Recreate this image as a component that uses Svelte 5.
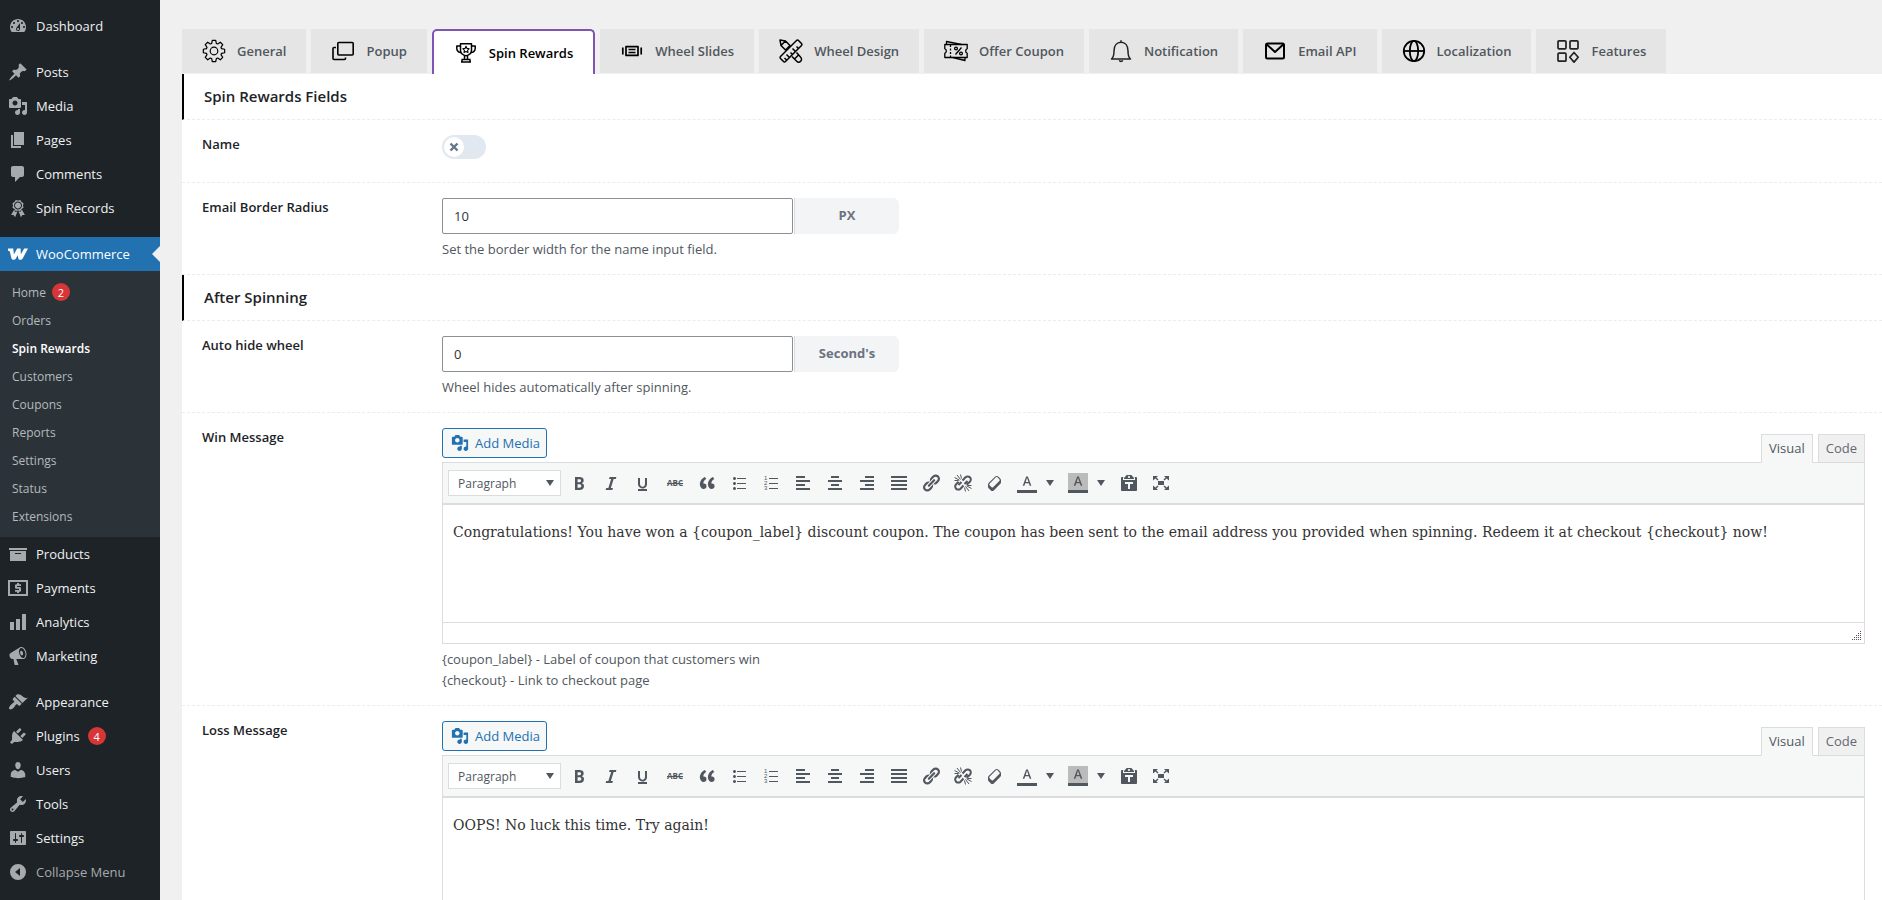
<script>
  const icons = {
    dashboard:
      'M3.76 16h12.48c1.1-1.37 1.76-3.11 1.76-5 0-4.42-3.58-8-8-8s-8 3.58-8 8c0 1.89.66 3.63 1.76 5zM10 4c.55 0 1 .45 1 1s-.45 1-1 1-1-.45-1-1 .45-1 1-1zM6 6c.55 0 1 .45 1 1s-.45 1-1 1-1-.45-1-1 .45-1 1-1zm8 0c.55 0 1 .45 1 1s-.45 1-1 1-1-.45-1-1 .45-1 1-1zm-5.37 5.55L12 7v6c0 1.1-.9 2-2 2s-2-.9-2-2c0-.57.24-1.08.63-1.45zM4 10c.55 0 1 .45 1 1s-.45 1-1 1-1-.45-1-1 .45-1 1-1zm12 0c.55 0 1 .45 1 1s-.45 1-1 1-1-.45-1-1 .45-1 1-1zm-5 3c0-.55-.45-1-1-1s-1 .45-1 1 .45 1 1 1 1-.45 1-1z',
    post: 'M10.44 3.02l1.82-1.82 6.36 6.35-1.83 1.82c-1.05-.68-2.48-.57-3.41.36l-.75.75c-.92.93-1.04 2.35-.35 3.41l-1.83 1.82-2.41-2.41-2.8 2.79c-.42.42-3.38 2.71-3.8 2.29s1.86-3.39 2.28-3.81l2.79-2.79L4.1 9.36l1.83-1.82c1.05.69 2.48.57 3.4-.36l.75-.75c.93-.92 1.05-2.35.36-3.41z',
    media:
      'M13 11V4c0-.55-.45-1-1-1h-1.67L9 1H5L3.67 3H2c-.55 0-1 .45-1 1v7c0 .55.45 1 1 1h10c.55 0 1-.45 1-1zM7 4.5c1.38 0 2.5 1.12 2.5 2.5S8.38 9.5 7 9.5 4.5 8.38 4.5 7 5.62 4.5 7 4.5zM14 6h5v10.5c0 1.38-1.12 2.5-2.5 2.5S14 17.88 14 16.5s1.12-2.5 2.5-2.5c.17 0 .34.02.5.05V9h-3V6zm-4 8.05V13h2v3.5c0 1.38-1.12 2.5-2.5 2.5S7 17.88 7 16.5 8.12 14 9.5 14c.17 0 .34.02.5.05z',
    page: 'M6 15V2h10v13H6zm-1 1h8v2H3V5h2v11z',
    comments: 'M5 2h9c1.1 0 2 .9 2 2v7c0 1.1-.9 2-2 2h-2l-5 5v-5H5c-1.1 0-2-.9-2-2V4c0-1.1.9-2 2-2z',
    awards:
      'M4.46 5.16L5 7.46l-.54 2.29 2.01 1.24L7.7 13l2.3-.54 2.3.54 1.23-2.01 2.01-1.24L15 7.46l.54-2.3-2-1.24-1.24-2.01-2.3.55-2.29-.54-1.25 2zm5.55 6.34c-2.21 0-4-1.79-4-4s1.79-4 4-4 4 1.79 4 4-1.79 4-4 4zm-.02-1C8.33 10.5 7 9.16 7 7.5c0-1.65 1.33-3 2.99-3s3 1.35 3 3c0 1.66-1.34 3-3 3zm3.84 1.1l-1.28 2.24-2.08-.47L13 19.2l1.4-2.2h2.5zm-7.7.07l1.25 2.25 2.13-.51L7 19.2 5.6 17H3.1z',
    woo: 'M0 4.6H5.2L5.9 10.2 9.2 4.6H12.6L12.9 10.2 16.2 4.6H20L14.8 14.2C14.2 15.3 13.3 15.8 12.3 15.8 11.2 15.8 10.4 15.1 10.2 13.9L9.8 11.2 8 14.2C7.4 15.2 6.5 15.8 5.5 15.8 4.4 15.8 3.6 15.2 3.3 14L2 8.2C1.8 7.3 1.3 6.9 0 6.8z',
    archive: 'M19 4v2H1V4h18zM2 7h16v10H2V7zm11 3V9H7v1h6z',
    payments:
      'M0 2h20v16H0zM2 4v12h16V4zM9 5h2v1.2h2v1.8H9v1h2.6c.9 0 1.4.6 1.4 1.4v2c0 .8-.5 1.4-1.4 1.4H11V15H9v-1.200H7V12h4v-1.200H8.400C7.500 10.800 7 10.200 7 9.400V7.600c0-.8.5-1.400 1.400-1.400H9z',
    chart: 'M18 18V2h-4v16h4zm-6 0V7H8v11h4zm-6 0v-8H2v8h4z',
    megaphone:
      'M18.15 5.94c.46 1.62.38 3.22-.02 4.48-.42 1.28-1.26 2.18-2.3 2.48-.16.06-.26.06-.4.06-.06.02-.12.02-.18.02-.06.02-.14.02-.22.02h-6.8l2.22 5.5c.02.14-.06.26-.14.34-.08.1-.24.16-.34.16H6.95c-.1 0-.26-.06-.34-.16-.08-.08-.16-.2-.14-.34l-1-5.5H4.25l-.02-.02c-.5.06-1.08-.18-1.54-.62s-.88-1.08-1.06-1.88c-.24-.8-.2-1.56-.02-2.2.18-.62.58-1.08 1.06-1.3l.02-.02 9-5.4c.1-.06.18-.1.24-.16.06-.04.14-.08.24-.12.16-.08.28-.12.5-.18 1.04-.3 2.24.1 3.22.98s1.84 2.24 2.26 3.86zm-2.58 5.98h-.02c.4-.1.74-.34 1.04-.7.58-.7.86-1.76.86-3.04 0-.64-.1-1.3-.28-1.98-.34-1.36-1.02-2.5-1.78-3.24s-1.68-1.1-2.46-.88c-.82.22-1.4.96-1.7 2-.32 1.04-.28 2.36.06 3.72.38 1.36 1 2.5 1.8 3.24.78.74 1.62 1.1 2.48.88zm-2.54-7.08c.22-.04.42-.02.62.04.38.16.76.48 1.02 1s.42 1.2.42 1.78c0 .3-.04.56-.12.8-.18.48-.44.84-.86.94-.34.1-.8-.06-1.14-.4s-.64-.86-.78-1.5c-.18-.62-.12-1.24.02-1.72s.48-.84.82-.94z',
    appearance:
      'M14.48 11.06L7.41 3.99l1.5-1.5c.5-.56 2.3-.47 3.51.32 1.21.8 1.43 1.28 2.91 2.1 1.18.64 2.45 1.26 4.45.85zm-.71.71L6.7 4.7 4.93 6.47c-.39.39-.39 1.02 0 1.41l1.06 1.06c.39.39.39 1.03 0 1.42-.6.6-1.43 1.11-2.21 1.69-.35.26-.7.53-1.01.84C1.43 14.23.4 16.08 1.4 17.07c.99 1 2.84-.03 4.18-1.36.31-.31.58-.66.85-1.02.57-.78 1.08-1.61 1.69-2.21.39-.39 1.02-.39 1.41 0l1.06 1.06c.39.39 1.02.39 1.41 0z',
    plugins:
      'M13.11 4.36L9.87 7.6 8 5.73l3.24-3.24c.35-.34 1.05-.2 1.56.32.52.51.66 1.21.31 1.55zm-8 1.77l.91-1.12 9.01 9.01-1.19.84c-.71.71-2.63 1.16-3.82 1.16H6.14L4.9 17.26c-.59.59-1.54.59-2.12 0-.59-.58-.59-1.53 0-2.12l1.24-1.24v-3.88c0-1.13.4-3.19 1.09-3.89zm7.26 3.97l3.24-3.24c.34-.35 1.04-.21 1.55.31.52.51.66 1.21.31 1.55l-3.24 3.25z',
    users:
      'M10 9.25c-2.27 0-2.73-3.44-2.73-3.44C7 4.02 7.82 2 9.97 2c2.16 0 2.98 2.02 2.71 3.81 0 0-.41 3.44-2.68 3.44zm0 2.57L12.72 10c2.39 0 4.52 2.33 4.52 4.53v2.49s-3.65 1.13-7.24 1.13c-3.65 0-7.24-1.13-7.24-1.13v-2.49c0-2.25 1.94-4.48 4.47-4.48z',
    tools:
      'M16.68 9.77c-1.34 1.34-3.3 1.67-4.95.99l-5.41 6.52c-.99.99-2.59.99-3.58 0s-.99-2.59 0-3.57l6.52-5.42c-.68-1.65-.35-3.61.99-4.95 1.28-1.28 3.12-1.62 4.72-1.06l-2.89 2.89 2.82 2.82 2.86-2.87c.53 1.58.18 3.39-1.08 4.65zM3.81 16.21c.4.39 1.04.39 1.43 0 .4-.4.4-1.04 0-1.43-.39-.4-1.03-.4-1.43 0-.39.39-.39 1.03 0 1.43z',
    settings:
      'M18 16V4c0-.55-.45-1-1-1H3c-.55 0-1 .45-1 1v12c0 .55.45 1 1 1h14c.55 0 1-.45 1-1zM8 11h1c.55 0 1 .45 1 1s-.45 1-1 1H8v1.5c0 .28-.22.5-.5.5s-.5-.22-.5-.5V13H6c-.55 0-1-.45-1-1s.45-1 1-1h1V5.5c0-.28.22-.5.5-.5s.5.22.5.5V11zm5-2h-1c-.55 0-1-.45-1-1s.45-1 1-1h1V5.5c0-.28.22-.5.5-.5s.5.22.5.5V7h1c.55 0 1 .45 1 1s-.45 1-1 1h-1v5.5c0 .28-.22.5-.5.5s-.5-.22-.5-.5V9z',
    collapse: 'M10 2a8 8 0 1 0 0 16 8 8 0 0 0 0-16zM12 6v8l-5-4z',
    bold: 'M6 4v13h4.54c1.37 0 2.46-.33 3.26-1 .8-.66 1.2-1.58 1.2-2.77 0-.84-.17-1.51-.51-2.01s-.9-.85-1.67-1.03v-.09c.57-.1 1.02-.4 1.36-.9s.51-1.13.51-1.91c0-1.14-.39-1.98-1.17-2.5C12.75 4.26 11.5 4 9.78 4H6zm2.57 5.15V6.26h1.36c.73 0 1.27.11 1.61.32.34.22.51.58.51 1.07 0 .54-.16.92-.47 1.15s-.82.35-1.51.35h-1.5zm0 2.19h1.6c1.44 0 2.16.53 2.16 1.61 0 .6-.17 1.05-.51 1.34s-.86.43-1.57.43H8.57v-3.38z',
    italic: 'M14.78 6h-2.13l-2.8 9h2.12l-.62 2H4.6l.62-2h2.14l2.8-9H8.03l.62-2h6.75z',
    underline:
      'M14 5h-2v5.71c0 1.99-1.12 2.98-2.45 2.98-1.32 0-2.55-1-2.55-2.96V5H5v5.87c0 1.91 1 4.54 4.48 4.54 3.49 0 4.52-2.58 4.52-4.5V5zm0 13v-2H5v2h9z',
    quote:
      'M9.49 13.22c0-.74-.2-1.38-.61-1.9-.62-.78-1.83-.88-2.53-.72-.29-1.65 1.11-3.75 2.92-4.65L7.88 4c-2.73 1.3-5.42 4.28-4.96 8.05C3.21 14.43 4.59 16 6.54 16c.85 0 1.56-.25 2.12-.75s.83-1.18.83-2.03zm8.05 0c0-.74-.2-1.38-.61-1.9-.63-.78-1.83-.88-2.53-.72-.29-1.65 1.11-3.75 2.92-4.65L15.93 4c-2.73 1.3-5.41 4.28-4.95 8.05.29 2.38 1.66 3.95 3.61 3.95.85 0 1.56-.25 2.12-.75s.83-1.18.83-2.03z',
    ul: 'M5.5 7C4.67 7 4 6.33 4 5.5 4 4.68 4.67 4 5.5 4 6.32 4 7 4.68 7 5.5 7 6.33 6.32 7 5.5 7zM8 5h9v1H8V5zm-2.5 7c-.83 0-1.5-.67-1.5-1.5C4 9.68 4.67 9 5.5 9c.82 0 1.5.68 1.5 1.5 0 .83-.68 1.5-1.5 1.5zM8 10h9v1H8v-1zm-2.5 7c-.83 0-1.5-.67-1.5-1.5 0-.82.67-1.5 1.5-1.5.82 0 1.5.68 1.5 1.5 0 .83-.68 1.5-1.5 1.5zM8 15h9v1H8v-1z',
    left: 'M12 5V3H3v2h9zm5 4V7H3v2h14zm-5 4v-2H3v2h9zm5 4v-2H3v2h14z',
    center: 'M14 5V3H6v2h8zm3 4V7H3v2h14zm-3 4v-2H6v2h8zm3 4v-2H3v2h14z',
    right: 'M17 5V3H8v2h9zm0 4V7H3v2h14zm0 4v-2H8v2h9zm0 4v-2H3v2h14z',
    justify: 'M2 3h16v2H2V3zm0 4h16v2H2V7zm0 4h16v2H2v-2zm0 4h16v2H2v-2z',
    link: 'M17.74 2.76c1.68 1.69 1.68 4.41 0 6.1l-1.53 1.52c-1.12 1.12-2.7 1.47-4.14 1.09l2.62-2.61.76-.77.76-.76c.84-.84.84-2.2 0-3.04-.84-.85-2.2-.85-3.04 0l-.77.76-3.38 3.38c-.37-1.44-.02-3.02 1.1-4.14l1.52-1.53c1.69-1.68 4.42-1.68 6.1 0zM8.59 13.43l5.34-5.34c.42-.42.42-1.1 0-1.52-.44-.43-1.13-.39-1.53 0l-5.33 5.34c-.42.42-.42 1.1 0 1.52.44.43 1.13.39 1.52 0zm-.76 2.29l4.14-4.15c.38 1.44.03 3.02-1.09 4.14l-1.52 1.53c-1.69 1.68-4.41 1.68-6.1 0-1.68-1.68-1.68-4.42 0-6.1l1.53-1.52c1.12-1.12 2.7-1.47 4.14-1.1l-4.14 4.15c-.85.84-.85 2.2 0 3.05.84.84 2.2.84 3.04 0z',
    eraser:
      'M14.29 4.59l1.1 1.11c.41.4.61.94.61 1.47v2.12c0 .53-.2 1.07-.61 1.47l-6.63 6.63c-.4.41-.94.61-1.47.61s-1.07-.2-1.47-.61l-1.11-1.1-1.1-1.11c-.41-.4-.61-.94-.61-1.47v-2.12c0-.54.2-1.07.61-1.48l6.63-6.62c.4-.41.94-.61 1.47-.61s1.06.2 1.47.61zm-6.21 9.7l6.42-6.42c.39-.39.39-1.03 0-1.43L12.36 4.3c-.19-.19-.45-.29-.72-.29s-.52.1-.71.29l-6.42 6.42c-.39.4-.39 1.04 0 1.43l2.14 2.14c.38.38 1.04.38 1.43 0z',
    color: 'M13.23 15h1.9L11 4H9L5 15h1.88l1.07-3h4.18zm-1.53-4.54H8.51L10 5.6z',
    paste: 'M12.38 2L15 5v1H5V5l2.64-3h4.74zM10 5c.55 0 1-.44 1-1 0-.55-.45-1-1-1s-1 .45-1 1c0 .56.45 1 1 1zm5.45-1H17c.55 0 1 .45 1 1v12c0 .56-.45 1-1 1H3c-.55 0-1-.44-1-1V5c0-.55.45-1 1-1h1.550L4 4.630V7h12V4.630zM14 11V9H6v2h3v5h2v-5h3z',
    full: 'M7 8h6v4H7zM2 3h5L5.400 4.500 7.500 6.400 6.500 7.500 4.400 5.500 2 7.500zM18 3v4.500L15.600 5.500 13.500 7.500 12.500 6.400 14.600 4.500 13 3zM2 17v-4.500L4.400 14.500 6.500 12.500 7.500 13.600 5.400 15.500 7 17zM18 17h-5L14.600 15.500 12.500 13.600 13.500 12.500 15.600 14.500 18 12.500z',
  };

  function gearPath() {
    const pts = [];
    const step = Math.PI / 4;
    for (let i = 0; i < 8; i++) {
      const a = i * step - Math.PI / 2;
      for (const [off, r] of [[-0.3, 7.9], [-0.16, 10.8], [0.16, 10.8], [0.3, 7.9]]) {
        pts.push(`${(12 + r * Math.cos(a + off)).toFixed(2)} ${(12 + r * Math.sin(a + off)).toFixed(2)}`);
      }
    }
    return 'M' + pts.join('L') + 'Z';
  }

  const tabs = [
    { label: 'General', art: `<g stroke-width="1.2"><path d="${gearPath()}"/><circle cx="12" cy="12" r="3.8"/></g>` },
    { label: 'Popup', art: '<g stroke-width="1.6"><rect x="6.800" y="3.500" width="15.400" height="12.500" rx="1"/><path d="M5 8.500H3a1 1 0 0 0-1 1v10a1 1 0 0 0 1 1h10.500a1 1 0 0 0 1-1v-1"/></g>' },
    { label: 'Spin Rewards', active: true, art: '<g stroke-width="1.500"><path d="M6.500 2.800h11v6.400a5.500 5.500 0 0 1-11 0z"/><path d="M6.500 5H2.800v2.500a4 4 0 0 0 4.200 4M17.500 5h3.700v2.500a4 4 0 0 1-4.200 4M10.500 14.800v3.400M13.500 14.800v3.400M7.500 18.500h9M7 21h10M8 18.500v2M16 18.500v2"/><path stroke-width="1.100" d="M12 5.300l1 2.100 2.200.300-1.600 1.600.400 2.300-2-1.100-2 1.100.400-2.300-1.600-1.600 2.200-.300z"/></g>' },
    { label: 'Wheel Slides', art: '<g stroke-width="1.700"><path d="M2.800 8.500v7M21.200 8.500v7"/><rect x="6" y="7.600" width="12" height="8.800"/><path stroke-width="1.400" d="M8.500 10.500h7M8.500 13.500h7"/></g>' },
    { label: 'Wheel Design', art: '<g stroke-width="1.500"><path d="M1 1l1 5.500L6.500 11 11 6.500 6.500 2zM2.200 6.200l4-4M13 17.500l4.700 4.700a2.800 2.800 0 0 0 4-4L17.500 13.500M15.500 20l4.500-4.500"/><path fill="#e5e5e5" d="M1.500 17.500l16-16a1.400 1.400 0 0 1 2 0l3 3a1.400 1.400 0 0 1 0 2l-16 16a1.400 1.400 0 0 1-2 0l-3-3a1.400 1.400 0 0 1 0-2z"/><path d="M19.500 9.500l-2-2M16.500 12.500l-3-3M13.500 15.500l-2-2M10.500 18.500l-3-3M7.500 21l-2-2"/></g>' },
    { label: 'Offer Coupon', art: '<g stroke-width="1.300"><path d="M2.500 5.500V2.500l15 3M9 18.500l12 3V18"/><path d="M.800 5.500h22.400v4.200a2.500 2.500 0 0 0 0 4.600v4.200H.800v-4.200a2.500 2.500 0 0 0 0-4.600z"/><path stroke-dasharray="2 1.500" d="M6.500 6v12.500"/><path d="M11.500 15.500l6-7"/><circle cx="12" cy="9.500" r="1.400"/><circle cx="17" cy="14.500" r="1.400"/></g>' },
    { label: 'Notification', art: '<g stroke-width="1.500" stroke="#222"><path d="M12 1.200v2M2.500 20h19c-1.800-1.500-2.500-4-2.500-8 0-5.500-3-8.700-7-8.700S5 6.500 5 12c0 4-.700 6.500-2.500 8z"/><path d="M10.300 21.200a1.800 1.800 0 0 0 3.400 0"/></g>' },
    { label: 'Email API', art: '<g stroke-width="2"><rect x="3" y="4.500" width="18" height="15" rx="1.500"/><path d="M3.800 5.500L12 13l8.200-7.500"/></g>' },
    { label: 'Localization', art: '<g stroke-width="1.800"><circle cx="12" cy="12" r="10.200"/><ellipse cx="12" cy="12" rx="4.200" ry="10.200"/><path d="M2 12h20"/></g>' },
    { label: 'Features', art: '<g stroke-width="1.700" stroke="#222"><rect x="2" y="1.800" width="8" height="8" rx="1"/><rect x="14" y="1.800" width="8" height="8" rx="1"/><rect x="2" y="14.200" width="8" height="8" rx="1"/><path d="M18 13.500l4.200 4.800-4.200 4.800-4.200-4.800z"/></g>' },
  ];

  const groups = [
    [{ label: 'Dashboard', icon: 'dashboard' }],
    [
      { label: 'Posts', icon: 'post' },
      { label: 'Media', icon: 'media' },
      { label: 'Pages', icon: 'page' },
      { label: 'Comments', icon: 'comments' },
      { label: 'Spin Records', icon: 'awards' },
    ],
    [
      {
        label: 'WooCommerce',
        icon: 'woo',
        current: true,
        children: ['Home', 'Orders', 'Spin Rewards', 'Customers', 'Coupons', 'Reports', 'Settings', 'Status', 'Extensions'],
      },
      { label: 'Products', icon: 'archive' },
      { label: 'Payments', icon: 'payments' },
      { label: 'Analytics', icon: 'chart' },
      { label: 'Marketing', icon: 'megaphone' },
    ],
    [
      { label: 'Appearance', icon: 'appearance' },
      { label: 'Plugins', icon: 'plugins', count: 4 },
      { label: 'Users', icon: 'users' },
      { label: 'Tools', icon: 'tools' },
      { label: 'Settings', icon: 'settings' },
    ],
  ];

  const tools = [
    ['bold', 'Bold'], ['italic', 'Italic'], ['underline', 'Underline'], ['strike', 'Strikethrough'],
    ['quote', 'Blockquote'], ['ul', 'Bulleted list'], ['ol', 'Numbered list'], ['left', 'Align left'],
    ['center', 'Align center'], ['right', 'Align right'], ['justify', 'Justify'], ['link', 'Insert link'],
    ['unlink', 'Remove link'], ['eraser', 'Clear formatting'],
  ];

  let nameEnabled = $state(false);
  let radius = $state('10');
  let hideAfter = $state('0');
  let win = $state(
    'Congratulations! You have won a {coupon_label} discount coupon. The coupon has been sent to the email address you provided when spinning. Redeem it at checkout {checkout} now!'
  );
  let loss = $state('OOPS! No luck this time. Try again!');
</script>

{#snippet glyph(name)}
  <svg class="glyph" viewBox="0 0 20 20" width="20" height="20" aria-hidden="true">
    <path d={icons[name]} fill="currentColor" fill-rule="evenodd" />
  </svg>
{/snippet}

{#snippet caret()}
  <svg class="caret" viewBox="0 0 8 6" width="8" height="6" aria-hidden="true"><path d="M0 0h8L4 6z" fill="currentColor" /></svg>
{/snippet}

{#snippet editor(id, value, onchange)}
  <div class="editor">
    <div class="editor-head">
      <button type="button" class="add-media">{@render glyph('media')}Add Media</button>
      <div class="modes">
        <button type="button" class="mode on">Visual</button>
        <button type="button" class="mode">Code</button>
      </div>
    </div>
    <div class="frame">
      <div class="toolbar">
        <span class="format">
          <select aria-label="Text format"><option>Paragraph</option><option>Heading 1</option></select>
          {@render caret()}
        </span>
        {#each tools as [name, title]}
          <button type="button" class="tool" aria-label={title}>
            {#if name === 'strike'}
              <s class="abc">ABC</s>
            {:else if name === 'ol'}
              <svg viewBox="0 0 20 20" width="20" height="20" aria-hidden="true">
                <path d="M8 5h9v1H8zM8 10h9v1H8zM8 15h9v1H8z" fill="currentColor" />
                <g class="nums"><text x="3" y="7">1</text><text x="3" y="12">2</text><text x="3" y="17">3</text></g>
              </svg>
            {:else if name === 'unlink'}
              <svg viewBox="0 0 20 20" width="20" height="20" aria-hidden="true" fill="none" stroke="currentColor">
                <path stroke-width="2" d="M9.500 7.500l3-3.200a3.100 3.100 0 0 1 4.400 4.400l-3.200 3M10.500 12.500l-3 3.200a3.100 3.100 0 0 1-4.400-4.400l2.500-2.500M5.500 12l3-3M11.500 11l3-3" />
                <path stroke-width="1" d="M1.500 4.500l5 2.700M4 2l3.500 4.500M7.500 1.500l1 4M1.500 7.500h4M18.500 15.500l-5-2.700M16 18l-3.500-4.500M12.500 18.500l-1-4M18.500 12.500h-4" />
              </svg>
            {:else}
              {@render glyph(name)}
            {/if}
          </button>
        {/each}
        <button type="button" class="split" aria-label="Text color">
          <span class="swatch">{@render glyph('color')}</span>{@render caret()}
        </button>
        <button type="button" class="split" aria-label="Background color">
          <span class="swatch shaded">{@render glyph('color')}</span>{@render caret()}
        </button>
        <button type="button" class="tool" aria-label="Paste as text">{@render glyph('paste')}</button>
        <button type="button" class="tool" aria-label="Fullscreen">{@render glyph('full')}</button>
      </div>
      <textarea {id} {value} oninput={(e) => onchange(e.currentTarget.value)}></textarea>
      <div class="status">
        <svg viewBox="0 0 10 10" width="10" height="10" aria-hidden="true">
          <path
            d="M8 0h1v1H8zM6 2h1v1H6zM8 2h1v1H8zM4 4h1v1H4zM6 4h1v1H6zM8 4h1v1H8zM2 6h1v1H2zM4 6h1v1H4zM6 6h1v1H6zM8 6h1v1H8zM0 8h1v1H0zM2 8h1v1H2zM4 8h1v1H4zM6 8h1v1H6zM8 8h1v1H8z"
            fill="#5c4a60"
          />
        </svg>
      </div>
    </div>
  </div>
{/snippet}

<div class="page">
  <nav class="sidebar" aria-label="Main menu">
    {#each groups as group}
      <ul class="group">
        {#each group as item}
          <li>
            <a href="#top" class="item" class:current={item.current}>
              {@render glyph(item.icon)}{item.label}
              {#if item.count}<span class="badge">{item.count}</span>{/if}
            </a>
            {#if item.children}
              <ul class="submenu">
                {#each item.children as child}
                  <li>
                    <a href="#top" class:chosen={child === 'Spin Rewards'}>
                      {child}{#if child === 'Home'}<span class="badge">2</span>{/if}
                    </a>
                  </li>
                {/each}
              </ul>
            {/if}
          </li>
        {/each}
      </ul>
    {/each}
    <button type="button" class="item collapse">{@render glyph('collapse')}Collapse Menu</button>
  </nav>

  <main>
    <div class="tabs">
      {#each tabs as tab}
        <a href="#top" class="tab" class:active={tab.active}>
          <svg viewBox="0 0 24 24" width="24" height="24" fill="none" stroke="#000" stroke-linejoin="round" aria-hidden="true">
            {@html tab.art}
          </svg>
          {tab.label}
        </a>
      {/each}
    </div>

    <form class="panel">
      <h2>Spin Rewards Fields</h2>
      <div class="row short">
        <label class="name" for="name-field">Name</label>
        <div>
          <span class="toggle">
            <input type="checkbox" id="name-field" bind:checked={nameEnabled} />
            <span class="knob">
              <svg viewBox="0 0 10 10" width="10" height="10" aria-hidden="true"><path d="M1.500 1.500l7 7M8.500 1.500l-7 7" stroke="#64748b" stroke-width="2.400" /></svg>
            </span>
          </span>
        </div>
      </div>
      <div class="row">
        <label class="name" for="radius">Email Border Radius</label>
        <div>
          <div class="measure"><input id="radius" type="text" bind:value={radius} /><span class="unit">PX</span></div>
          <p class="hint">Set the border width for the name input field.</p>
        </div>
      </div>
      <h2>After Spinning</h2>
      <div class="row">
        <label class="name" for="hide">Auto hide wheel</label>
        <div>
          <div class="measure"><input id="hide" type="text" bind:value={hideAfter} /><span class="unit">Second's</span></div>
          <p class="hint">Wheel hides automatically after spinning.</p>
        </div>
      </div>
      <div class="row">
        <label class="name" for="win">Win Message</label>
        <div>
          {@render editor('win', win, (v) => (win = v))}
          <p class="hint">{'{coupon_label}'} - Label of coupon that customers win<br />{'{checkout}'} - Link to checkout page</p>
        </div>
      </div>
      <div class="row">
        <label class="name" for="loss">Loss Message</label>
        <div>
          {@render editor('loss', loss, (v) => (loss = v))}
        </div>
      </div>
    </form>
  </main>
</div>

<style>
  :global(body) {
    background: #f0f0f1;
  }
  .page,
  .page :is(button, input, select) {
    font-family: 'Open Sans', 'Noto Sans', sans-serif;
  }
  .page {
    display: flex;
    height: 100vh;
    overflow: hidden;
    font-size: 13px;
    color: #3c434a;
  }
  .page :is(*, *::before, *::after) {
    box-sizing: border-box;
  }
  ul {
    list-style: none;
    margin: 0;
    padding: 0;
  }
  a {
    text-decoration: none;
    color: inherit;
  }
  button {
    cursor: pointer;
  }
  svg {
    display: block;
    flex: none;
  }

  .sidebar {
    flex: none;
    width: 160px;
    padding-top: 9px;
    background: #1d2327;
    color: #f0f0f1;
  }
  .group + .group {
    margin-top: 12px;
  }
  .item {
    position: relative;
    display: flex;
    align-items: center;
    width: 100%;
    height: 34px;
    padding: 0 8px;
    gap: 8px;
    font-size: 13px;
  }
  .item .glyph {
    color: #a7aaad;
    width: 20px;
    height: 20px;
  }
  .item.current {
    background: #2271b1;
    color: #fff;
  }
  .item.current .glyph {
    color: #fff;
  }
  .item.current::after {
    content: '';
    position: absolute;
    right: 0;
    top: 9px;
    border: 8px solid transparent;
    border-left: 0;
    border-right-color: #f0f0f1;
  }
  .collapse {
    border: 0;
    background: none;
    color: #a7aaad;
  }
  .badge {
    display: inline-flex;
    align-items: center;
    justify-content: center;
    width: 18px;
    height: 18px;
    border-radius: 9px;
    background: #d63638;
    color: #fff;
    font-size: 11px;
  }
  .submenu {
    padding: 7px 0;
    background: #2c3338;
  }
  .submenu a {
    display: flex;
    align-items: center;
    gap: 6px;
    height: 28px;
    padding: 0 12px;
    font-size: 12px;
    color: #b4b9be;
  }
  .submenu a.chosen {
    color: #fff;
    font-weight: 600;
  }

  main {
    flex: 1;
    min-width: 0;
    padding: 29px 0 0 22px;
    overflow-y: auto;
    scrollbar-width: none;
  }
  .tabs {
    display: flex;
    align-items: flex-start;
    gap: 5px;
    height: 45px;
  }
  .tab {
    display: flex;
    align-items: center;
    gap: 11px;
    height: 44px;
    padding: 0 20px;
    background: #e5e5e5;
    color: #50575e;
    font-weight: 600;
    white-space: nowrap;
  }
  .tab.active {
    height: 45px;
    border: 2px solid #7f54b3;
    border-bottom: 0;
    border-radius: 5px 5px 0 0;
    background: #fff;
    color: #000;
  }

  .panel {
    background: #fff;
  }
  h2 {
    margin: 0;
    height: 46px;
    padding-left: 20px;
    border-left: 2px solid #000;
    border-bottom: 1px dashed #ececec;
    font-size: 15px;
    line-height: 44px;
    font-weight: 600;
    color: #1d2327;
  }
  .row {
    display: grid;
    grid-template-columns: 240px minmax(0, 1fr);
    padding: 15px 17px 14px 20px;
    border-bottom: 1px dashed #ececec;
  }
  .row.short {
    min-height: 63px;
  }
  .name {
    line-height: 18px;
    font-weight: 600;
    color: #1d2327;
  }
  .hint {
    margin: 5px 0 0;
    line-height: 21px;
    color: #50575e;
  }
  .toggle {
    display: grid;
    width: 44px;
    height: 24px;
  }
  .toggle input,
  .knob {
    grid-area: 1 / 1;
  }
  .toggle input {
    appearance: none;
    margin: 0;
    border-radius: 12px;
    background: #e2e8f0;
  }
  .knob {
    display: flex;
    align-items: center;
    justify-content: center;
    width: 20px;
    height: 20px;
    margin: 2px;
    border-radius: 10px;
    background: #fff;
    pointer-events: none;
  }
  .toggle input:checked {
    background: #7f54b3;
  }
  .toggle input:checked + .knob {
    justify-self: end;
  }
  .measure {
    display: flex;
    gap: 1px;
    height: 36px;
  }
  .measure input {
    width: 351px;
    padding: 0 11px;
    border: 1px solid #8c8f94;
    border-radius: 2px;
    background: #fff;
    color: #2c3338;
    font-size: 13px;
  }
  .unit {
    width: 105px;
    border-left: 1px solid #dcdcde;
    border-radius: 0 6px 6px 0;
    background: #f3f4f6;
    color: #6b7280;
    font-weight: 700;
    line-height: 34px;
    text-align: center;
  }

  .editor-head {
    display: flex;
    justify-content: space-between;
    align-items: flex-start;
    height: 34px;
  }
  .add-media {
    display: flex;
    align-items: center;
    gap: 6px;
    height: 30px;
    padding: 0 6px 0 8px;
    border: 1px solid #2271b1;
    border-radius: 3px;
    background: #f6f7f7;
    color: #2271b1;
    font-size: 13px;
  }
  .add-media .glyph {
    width: 18px;
    height: 18px;
  }
  .modes {
    display: flex;
    gap: 5px;
    align-self: flex-end;
    margin-bottom: -1px;
    z-index: 1;
  }
  .mode {
    height: 29px;
    padding: 0 7px 2px;
    border: 1px solid #dcdcde;
    background: #f0f0f1;
    color: #646970;
    font-size: 13px;
  }
  .mode.on {
    border-bottom-color: #f6f7f7;
    background: #f6f7f7;
    color: #50575e;
  }
  .frame {
    border: 1px solid #dcdcde;
  }
  .toolbar {
    display: flex;
    align-items: center;
    gap: 4px;
    height: 42px;
    padding: 0 5px;
    border-bottom: 2px solid #dcdcde;
    background: #f6f7f7;
    color: #50575e;
  }
  .format {
    display: grid;
    align-items: center;
    width: 113px;
    height: 26px;
  }
  .format select,
  .format .caret {
    grid-area: 1 / 1;
  }
  .format select {
    appearance: none;
    width: 100%;
    height: 26px;
    padding: 0 9px;
    border: 1px solid #dcdcde;
    border-radius: 0;
    background: #fff;
    color: #50575e;
    font-size: 12px;
  }
  .format .caret {
    justify-self: end;
    margin-right: 7px;
    pointer-events: none;
  }
  .tool,
  .split {
    display: flex;
    align-items: center;
    justify-content: center;
    width: 28px;
    height: 28px;
    padding: 0;
    border: 0;
    background: none;
    color: #50575e;
  }
  .split {
    width: 47px;
    justify-content: flex-start;
    gap: 9px;
    padding-left: 4px;
  }
  .swatch {
    width: 20px;
    height: 20px;
    border-bottom: 3px solid #50575e;
  }
  .swatch .glyph {
    height: 17px;
  }
  .shaded {
    background: #bbb;
  }
  .abc {
    font-size: 8px;
    font-weight: 700;
    line-height: 10px;
  }
  .nums {
    font: 6px 'Liberation Sans', sans-serif;
    fill: currentColor;
  }
  textarea {
    display: block;
    width: 100%;
    height: 117px;
    padding: 15px 10px;
    border: 0;
    resize: none;
    background: #fff;
    color: #333;
    font: 14px/24px 'DejaVu Serif', serif;
  }
  .status {
    display: flex;
    justify-content: flex-end;
    align-items: flex-end;
    height: 21px;
    padding: 2px;
    border-top: 1px solid #dcdcde;
  }
</style>
